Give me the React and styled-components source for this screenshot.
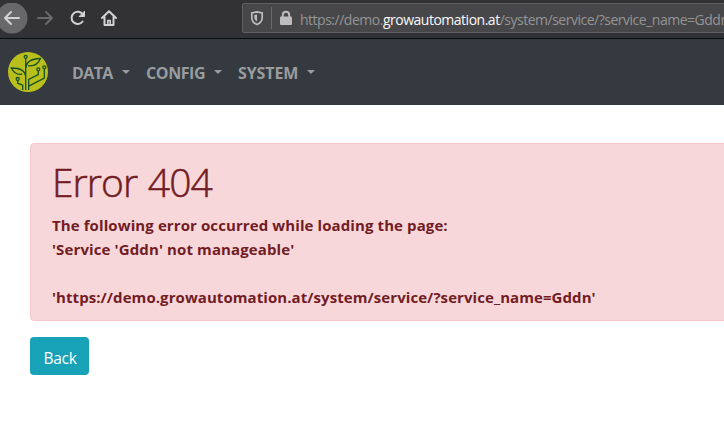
import React from "react";
import styled, { createGlobalStyle } from "styled-components";

const Global = createGlobalStyle`
  * { box-sizing: border-box; }
  body { margin: 0; background: #fff; overflow: hidden; font-family: "Open Sans", "Noto Sans", sans-serif; }
`;

const Page = styled.div`
  width: 724px;
  height: 445px;
  overflow: hidden;
`;

const BrowserBar = styled.header`
  display: flex;
  height: 39px;
  padding-top: 3px;
  background: #323234;
  border-bottom: 1px solid #0c0c0d;
`;

const BrowserIcons = styled.div`
  flex: none;
  width: 242px;
  height: 31px;
`;

const AddressBar = styled.div`
  display: flex;
  flex: none;
  align-items: center;
  width: 500px;
  height: 30px;
  background: #474749;
  border: 1px solid #606063;
  border-radius: 2px;
`;

const AddressIcons = styled.svg`
  flex: none;
  width: 57px;
  height: 28px;
`;

const Address = styled.div`
  padding-top: 4px;
  font-size: 14px;
  line-height: 20px;
  letter-spacing: ${(p) => p.$spacing};
  white-space: nowrap;
  color: #949496;
`;

const Host = styled.span`
  color: #f9f9fa;
`;

const Navbar = styled.nav`
  display: flex;
  align-items: center;
  height: 66px;
  padding: 0 8px;
  background: #343a40;
`;

const Logo = styled.svg`
  flex: none;
  width: 40px;
  height: 40px;
  margin-right: 24px;
`;

const NavItem = styled.a`
  display: flex;
  align-items: center;
  flex: none;
  width: ${(p) => p.$width};
  padding-top: 2px;
  font-size: 16px;
  font-weight: 700;
  line-height: 24px;
  letter-spacing: ${(p) => p.$spacing};
  color: #999c9f;
`;

const NavText = styled.span`
  flex: 1;
`;

const Caret = styled.i`
  margin: 0 16px 2px 0;
  border: 4px solid transparent;
  border-top-color: #999c9f;
  border-bottom: 0;
`;

const Main = styled.main`
  padding: 38px 0 0 30px;
`;

const Alert = styled.section`
  width: 720px;
  height: 178px;
  padding: 14px 21px;
  color: #721c24;
  background: #f8d7da;
  border: 1px solid #f5c6cb;
  border-radius: 4px;
`;

const Title = styled.h1`
  margin: 0 0 7px;
  font-size: 39px;
  font-weight: 300;
  line-height: 48px;
  letter-spacing: ${(p) => p.$spacing};
  word-spacing: 1.5px;
  -webkit-text-stroke: 0.5px #721c24;
`;

const Line = styled.p`
  margin: 0;
  height: 24px;
  font-size: 15px;
  font-weight: 700;
  line-height: 24px;
  letter-spacing: ${(p) => p.$spacing};
  white-space: nowrap;
`;

const BackButton = styled.button`
  display: block;
  width: 59px;
  height: 38px;
  margin-top: 16px;
  padding: 3px 0 0 1px;
  font-family: inherit;
  font-size: 15.5px;
  line-height: 24px;
  letter-spacing: -0.3px;
  color: #fff;
  background: #17a2b8;
  border: 0;
  border-radius: 4px;
`;

function NavigationIcons() {
  return (
    <svg width="242" height="31" viewBox="0 3 242 31" fill="none" stroke="#d2d2d3" strokeWidth="2" strokeLinecap="round" strokeLinejoin="round">
      <circle cx="12" cy="18" r="15.5" fill="#68686a" stroke="none" />
      <path d="M19 18H5M11 12l-6 6 6 6" />
      <path d="M38 18h14M46 12l6 6-6 6" stroke="#69696b" />
      <path d="M82.800 14.500A6.100 6.100 0 1 0 82.600 21.500" />
      <path d="M84.500 11.500v5H79.500z" fill="#d2d2d3" strokeWidth="1" />
      <path d="M102 18l7-6.800 7 6.800M104.500 17v8h9v-8" />
      <path d="M107.800 25v-4.500h2.400v4.500" strokeWidth="1.600" />
    </svg>
  );
}

function Circuit() {
  return (
    <Logo viewBox="0 0 40 40" fill="none" stroke="#17502a" strokeWidth="1.3">
      <circle cx="20" cy="20" r="20" fill="#b9bf1b" stroke="none" />
      <circle cx="17.700" cy="4.800" r="1.500" />
      <path d="M17.700 6.500V38M18 16c.2-5.500 5-9.300 14.500-9.500-2.500 6-7.200 8-12.500 7.200M17.700 25c-.2-5.500-5-9-14.400-9 2.700 5.500 6 7 10.800 6.200" />
      <circle cx="30.300" cy="17.300" r="1.500" />
      <path d="M30.300 19v3.500L20.700 27.500V38" />
      <circle cx="36.300" cy="15.300" r="1.500" />
      <path d="M36.300 17v9L20.700 34.200" />
      <circle cx="9.700" cy="27" r="1.500" />
      <path d="M9.700 28.700v2.500l5 2V38" />
    </Logo>
  );
}

export default function App() {
  return (
    <Page>
      <Global />
      <BrowserBar>
        <BrowserIcons><NavigationIcons /></BrowserIcons>
        <AddressBar>
          <AddressIcons viewBox="243 4 57 28" fill="none">
            <path d="M257 11.800l5.200 1.200v4.500c0 3.500-2 5.700-5.200 7-3.200-1.300-5.200-3.500-5.200-7V13z" stroke="#bdbdbf" strokeWidth="1.700" />
            <path d="M257 14.500v7c-1.700-1-2.700-2.300-2.700-4.200V15z" fill="#bdbdbf" />
            <path d="M271.500 7v22" stroke="#69696b" />
            <rect x="280" y="16.500" width="12" height="8.500" rx="1" fill="#bdbdbf" />
            <path d="M282.800 17.500V15a3.200 3.200 0 0 1 6.400 0v2.500" stroke="#bdbdbf" strokeWidth="1.900" />
          </AddressIcons>
          <Address $spacing="-0.49px">
            https://demo.<Host>growautomation.at</Host>/system/service/?service_name=Gddn
          </Address>
        </AddressBar>
      </BrowserBar>
      <Navbar>
        <Circuit />
        <NavItem $width="74px" $spacing="-0.6px"><NavText>DATA</NavText><Caret /></NavItem>
        <NavItem $width="92px" $spacing="-0.4px"><NavText>CONFIG</NavText><Caret /></NavItem>
        <NavItem $width="93px" $spacing="-0.1px"><NavText>SYSTEM</NavText><Caret /></NavItem>
      </Navbar>
      <Main>
        <Alert>
          <Title $spacing="-0.95px">Error 404</Title>
          <Line $spacing="0.1px">The following error occurred while loading the page:</Line>
          <Line $spacing="0.12px">'Service 'Gddn' not manageable'</Line>
          <Line />
          <Line $spacing="0.07px">'https://demo.growautomation.at/system/service/?service_name=Gddn'</Line>
        </Alert>
        <BackButton>Back</BackButton>
      </Main>
    </Page>
  );
}
